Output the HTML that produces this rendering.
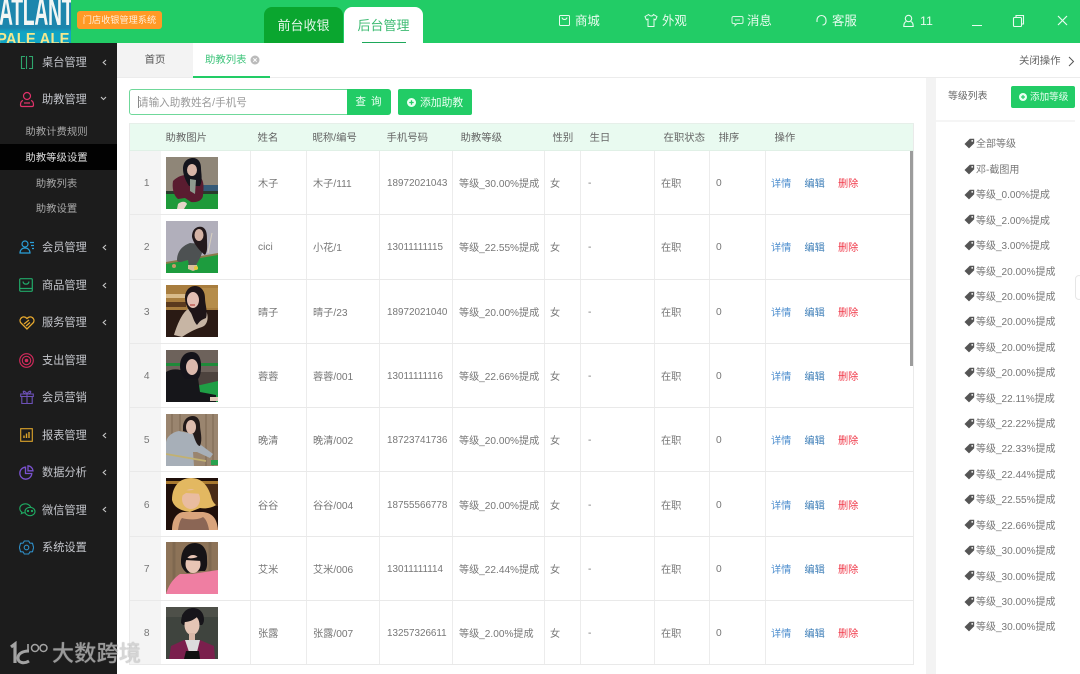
<!DOCTYPE html>
<html lang="zh">
<head>
<meta charset="utf-8">
<title>助教列表</title>
<style>
*{box-sizing:border-box;margin:0;padding:0}
html,body{width:1080px;height:674px;overflow:hidden;background:#fff}
body{position:relative;font-family:"Liberation Sans","Noto Sans CJK SC",sans-serif;font-size:10.4px;color:#666}
.a{position:absolute;white-space:nowrap}
svg{display:block}
.hd{left:0;top:0;width:1080px;height:43px;background:#22cc66}
.logo{left:0;top:0;width:71px;height:43px;background:linear-gradient(#1c86ad 0,#1c86ad 28px,#10a4c4 32px);overflow:hidden}
.logo b{position:absolute;white-space:nowrap;font-family:"Liberation Sans",sans-serif}
.badge{left:77px;top:11px;width:85px;height:18px;background:#ff9a26;border-radius:3px;color:#ffeeda;font-size:9.2px;line-height:19px;text-align:center}
.t1{left:264px;top:7px;width:79px;height:36px;background:#0aa62f;border-radius:8px 8px 0 0;color:#e3f7e8;font-size:13px;line-height:37px;text-align:center}
.t2{left:344px;top:7px;width:79px;height:36px;background:#fff;border-radius:8px 8px 0 0;color:#3dbb72;font-size:13px;line-height:37px;text-align:center}
.t2 i{position:absolute;left:18px;top:34.5px;width:44px;height:1.5px;background:#1da85a}
.nv{color:#e8fbef;font-size:12.4px;line-height:16px;top:13px}
.side{left:0;top:43px;width:117px;height:631px;background:#1c1c1c}
.m{left:42px;color:#c4c6cc;font-size:11.2px;line-height:16px}
.s{left:0;width:113px;text-align:center;color:#a6a6a6;font-size:10.4px;line-height:16px}
.arr{left:101px;color:#c8c8c8}
.bar{left:117px;top:43px;width:963px;height:35px;border-bottom:1px solid #ececec}
.home{left:117px;top:43px;width:76px;height:34px;background:#f3f3f3;text-align:center;line-height:36px;color:#555}
.act{left:193px;top:43px;width:77px;height:35px;border-bottom:2px solid #22cc66;color:#3dc47a;line-height:35px;padding-left:12px}
.inp{left:129px;top:89px;width:219px;height:26px;border:1px solid #6fd89a;border-radius:3px 0 0 3px;color:#9a9a9a;font-size:10.6px;line-height:26px;padding-left:8px}
.btn{background:#22cc66;color:#eafff2;text-align:center;border-radius:2px}
table{position:absolute;left:129px;top:123px;width:784px;border-collapse:collapse;table-layout:fixed;border-left:1px solid #eaeaea;border-right:1px solid #eaeaea}
thead tr{height:27px;background:#e9faf0}
thead th{font-weight:400;text-align:left;color:#666;font-size:10.4px;border-top:1px solid #e6efe9;border-bottom:1px solid #e0f0e6;padding-bottom:1px}
tbody tr{height:64.3px}
tbody td{border-bottom:1px solid #e9e9e9;border-right:1px solid #ececec;color:#777;font-size:10.2px;white-space:nowrap;overflow:hidden}
tbody td:nth-child(1){background:#f4f4f4;text-align:center;border-right:0;color:#777;padding-left:3px;padding-top:2px}
th:nth-child(2){padding-left:5px}th:nth-child(3){padding-left:7px}th:nth-child(4){padding-left:6px}th:nth-child(5){padding-left:7px}th:nth-child(6){padding-left:8px}th:nth-child(7){padding-left:8px}th:nth-child(8){padding-left:9px}th:nth-child(9){padding-left:9px}th:nth-child(10){padding-left:9px}th:nth-child(11){padding-left:9px}
td:nth-child(2){padding-left:5px}td:nth-child(3){padding-left:7px}td:nth-child(4){padding-left:6px}td:nth-child(5){padding-left:7px;padding-top:2px;font-size:9.9px}td:nth-child(6){padding-left:6px;font-size:10.1px}td:nth-child(7){padding-left:5px}td:nth-child(8){padding-left:7px;padding-top:2px}td:nth-child(9){padding-left:6px}td:nth-child(10){padding-left:6px;padding-top:2px}td:nth-child(11){padding-left:5px;border-right:0}
td u{text-decoration:none;display:inline-block;width:33.5px}
.d{color:#4f8fcf}.e{color:#3f7fb8}.x{color:#f03c4c}
.sb{left:910px;top:151px;width:3px;height:215px;background:#9c9c9c}
.gap{left:926px;top:78px;width:10px;height:596px;background:#f3f3f3}
.rh{left:936px;top:120px;width:139px;height:2px;background:#f5f5f5}
.it{left:976px;color:#777;font-size:10px;line-height:14px;margin-top:1px}
.tag{left:963.5px;width:11px;height:11px;margin-top:.5px}
.wm{left:52px;top:639px;color:#c9c9c9;opacity:.72;font-size:22px;line-height:30px;letter-spacing:.3px;font-weight:500;text-shadow:0 0 1px #888}
</style>
</head>
<body>
<svg width="0" height="0" style="position:absolute"><defs>
<symbol id="tg" viewBox="0 0 11 11"><path d="M5.800 .8h4.400v4.400L5 10.400 .5 6z" fill="#555"/><circle cx="8.200" cy="2.900" r=".9" fill="#fff"/></symbol>
</defs></svg>

<div class="a hd"></div>
<div class="a logo">
<b style="left:-1px;top:-8px;color:#f2f6f4;font-size:39px;line-height:42px;transform:scaleX(.495);transform-origin:0 0;letter-spacing:-.5px">ATLANT</b>
<b style="left:-3px;top:31px;color:#f3e88e;font-size:16px;line-height:18px;transform:scaleX(.92);transform-origin:0 0;letter-spacing:.2px">PALE ALE</b>
</div>
<div class="a badge">门店收银管理系统</div>
<div class="a t1">前台收银</div>
<div class="a t2">后台管理<i></i></div>

<svg class="a" style="left:558px;top:14px" width="13" height="13" viewBox="0 0 13 13" fill="none" stroke="#e8fbef" stroke-width="1"><rect x="1.500" y="1.500" width="10" height="10" rx="1"/><path d="M4 3.500c.4 2.600 4.600 2.600 5 0"/></svg>
<div class="a nv" style="left:575px">商城</div>
<svg class="a" style="left:644px;top:13px" width="14" height="15" viewBox="0 0 14 15" fill="none" stroke="#e8fbef" stroke-width="1"><path d="M4.600 1.500 1 3.600l1.400 3.200 1.600-.7V13.500h6V6.100l1.600.7L13 3.600 9.400 1.500c-.5 2-3.300 2-4.800 0z"/></svg>
<div class="a nv" style="left:662px">外观</div>
<svg class="a" style="left:731px;top:15px" width="13" height="12" viewBox="0 0 13 12" fill="none" stroke="#d5f5e0" stroke-width="1"><path d="M2.500 1.500h8a1.500 1.500 0 0 1 1.500 1.500v4a1.500 1.500 0 0 1-1.500 1.500H6L4 10.500V8.500H2.500A1.500 1.500 0 0 1 1 7V3a1.500 1.500 0 0 1 1.500-1.500z"/><path d="M4 5h5"/></svg>
<div class="a nv" style="left:747px">消息</div>
<svg class="a" style="left:815px;top:14px" width="13" height="14" viewBox="0 0 13 14" fill="none" stroke="#e8fbef" stroke-width="1.100"><path d="M2 8V6a4.500 4.500 0 0 1 9 0v1.500c0 2-1.500 3.500-3.500 3.500"/></svg>
<div class="a nv" style="left:832px">客服</div>
<svg class="a" style="left:902px;top:14px" width="13" height="14" viewBox="0 0 13 14" fill="none" stroke="#e8fbef" stroke-width="1.100"><circle cx="6.500" cy="4.500" r="3.200"/><path d="M4.300 7.500C2.500 8 1.800 9.500 1.800 12.500h9.400c0-3-.7-4.500-2.500-5"/></svg>
<div class="a nv" style="left:920px">11</div>
<div class="a" style="left:972px;top:25px;width:10px;height:1.200px;background:#e8fbef"></div>
<svg class="a" style="left:1012px;top:14px" width="13" height="14" viewBox="0 0 13 14" fill="none" stroke="#e8fbef" stroke-width="1.100"><rect x="1.500" y="3.500" width="8" height="9" rx="1"/><path d="M4 3.500V1.500h7.500v8.500H9.500"/></svg>
<svg class="a" style="left:1057px;top:15px" width="11" height="11" viewBox="0 0 11 11" fill="none" stroke="#e8fbef" stroke-width="1.200"><path d="M1 1l9 9M10 1l-9 9"/></svg>

<div class="a side"></div>
<div class="a" style="left:0;top:144px;width:117px;height:26px;background:#020202"></div>

<svg class="a" style="left:20px;top:55px" width="14" height="15" viewBox="0 0 14 15" fill="none" stroke="#2fa56c" stroke-width="1.100"><path d="M5 1.500H1.500v12H5M9 1.500h3.500v12H9M6.500 1v13"/></svg>
<div class="a m" style="top:55px">桌台管理</div>
<svg class="a" style="left:19px;top:91px" width="16" height="17" viewBox="0 0 16 17" fill="none" stroke="#e0326a" stroke-width="1.200"><circle cx="8" cy="5" r="3.500"/><path d="M4 9.500c-2 .5-2.500 2-2.500 4.500 0 1 .5 1.500 1.500 1.500h10c1 0 1.500-.5 1.500-1.500 0-2.500-.5-4-2.500-4.500M5 12h6"/></svg>
<div class="a m" style="top:92px">助教管理</div>
<div class="a s" style="top:125px">助教计费规则</div>
<div class="a s" style="top:151px;color:#dcdcdc">助教等级设置</div>
<div class="a s" style="top:177px">助教列表</div>
<div class="a s" style="top:202px">助教设置</div>
<svg class="a" style="left:19px;top:240px" width="16" height="14" viewBox="0 0 16 14" fill="none" stroke="#2a9fd8" stroke-width="1.200"><circle cx="6" cy="4" r="3"/><path d="M1 13c0-3 2-5 5-5s5 2 5 5zM11 2.500h4M12 5.500h3M13 8.500h2"/></svg>
<div class="a m" style="top:240px">会员管理</div>
<svg class="a" style="left:19px;top:278px" width="14" height="14" viewBox="0 0 14 14" fill="none" stroke="#21a868" stroke-width="1.200"><rect x=".7" y=".7" width="12.600" height="12.600" rx="1"/><path d="M.7 10.500h12.600M4 3.500c.5 3.500 5.500 3.500 6 0"/></svg>
<div class="a m" style="top:278px">商品管理</div>
<svg class="a" style="left:19px;top:316px" width="16" height="14" viewBox="0 0 16 14" fill="none" stroke="#e8a92e" stroke-width="1.300"><path d="M8 13 1.500 6.500C-.5 3 4-1.500 8 2.500c4-4 8.500.5 6.500 4zM5 8l5-4M7 10l4-3.500"/></svg>
<div class="a m" style="top:315px">服务管理</div>
<svg class="a" style="left:19px;top:353px" width="15" height="15" viewBox="0 0 15 15" fill="none" stroke="#d22a5c" stroke-width="1.100"><circle cx="7.500" cy="7.500" r="6.800"/><circle cx="7.500" cy="7.500" r="4.200"/><circle cx="7.500" cy="7.500" r="1.800" fill="#d22a5c" stroke="none"/></svg>
<div class="a m" style="top:353px">支出管理</div>
<svg class="a" style="left:20px;top:390px" width="14" height="14" viewBox="0 0 14 14" fill="none" stroke="#6d51b8" stroke-width="1.100"><path d="M.7 4h12.600v2.500H.7zM1.800 6.500v7h10.400v-7M7 4v9.500M7 4C5 .5 2.500.5 3.500 2.500 4 3.500 5.500 4 7 4zM7 4c2-3.500 4.500-3.500 3.500-1.500C10 3.500 8.500 4 7 4z"/></svg>
<div class="a m" style="top:390px">会员营销</div>
<svg class="a" style="left:20px;top:428px" width="13" height="14" viewBox="0 0 13 14" fill="none" stroke="#dea52b" stroke-width="1.100"><rect x=".7" y=".7" width="11.600" height="12.600"/><path d="M4 10V7.500M6.500 10V5.500M9 10V4" stroke-width="1.400"/></svg>
<div class="a m" style="top:428px">报表管理</div>
<svg class="a" style="left:19px;top:465px" width="15" height="15" viewBox="0 0 15 15" fill="none" stroke="#7a52d0" stroke-width="1.300"><path d="M6.500 2.200a6 6 0 1 0 6.300 6.300H6.500z"/><path d="M9 .8a5.500 5.500 0 0 1 5 5H9z"/></svg>
<div class="a m" style="top:465px">数据分析</div>
<svg class="a" style="left:19px;top:503px" width="17" height="14" viewBox="0 0 17 14" fill="none" stroke="#1faa62" stroke-width="1.100"><path d="M6.500.8C3 .8.800 3 .8 5.500c0 1.500.7 2.700 2 3.600l-.4 1.500 1.800-.9c.5.100 1 .2 1.500.2"/><path d="M12 4.500c-1.500-3-4-3.700-5.500-3.700"/><ellipse cx="11" cy="8.500" rx="5" ry="4.200"/><circle cx="9" cy="8" r=".6" fill="#1faa62"/><circle cx="13" cy="8" r=".6" fill="#1faa62"/></svg>
<div class="a m" style="top:503px">微信管理</div>
<svg class="a" style="left:19px;top:540px" width="15" height="15" viewBox="0 0 15 15" fill="none" stroke="#2f8fc8" stroke-width="1.100"><path d="M5.300 1 9.700 1l1.200 2.100 2.600.2 1.100 4.200-1.100 4.200-2.600.2L9.700 14H5.300l-1.200-2.100-2.600-.2L.4 7.500l1.100-4.200 2.600-.2z"/><circle cx="7.500" cy="7.500" r="2.300"/></svg>
<div class="a m" style="top:540px">系统设置</div>

<svg class="a arr" style="left:102px;top:59px" width="5" height="7" viewBox="0 0 5 7" fill="none" stroke="#c8c8c8" stroke-width="1.100"><path d="M4 1 1.200 3.500 4 6"/></svg>
<svg class="a" style="left:100px;top:96px" width="7" height="5" viewBox="0 0 7 5" fill="none" stroke="#c8c8c8" stroke-width="1.100"><path d="M1 1l2.500 2.500L6 1"/></svg>
<svg class="a arr" style="left:102px;top:244px" width="5" height="7" viewBox="0 0 5 7" fill="none" stroke="#c8c8c8" stroke-width="1.100"><path d="M4 1 1.200 3.500 4 6"/></svg>
<svg class="a arr" style="left:102px;top:282px" width="5" height="7" viewBox="0 0 5 7" fill="none" stroke="#c8c8c8" stroke-width="1.100"><path d="M4 1 1.200 3.500 4 6"/></svg>
<svg class="a arr" style="left:102px;top:319px" width="5" height="7" viewBox="0 0 5 7" fill="none" stroke="#c8c8c8" stroke-width="1.100"><path d="M4 1 1.200 3.500 4 6"/></svg>
<svg class="a arr" style="left:102px;top:432px" width="5" height="7" viewBox="0 0 5 7" fill="none" stroke="#c8c8c8" stroke-width="1.100"><path d="M4 1 1.200 3.500 4 6"/></svg>
<svg class="a arr" style="left:102px;top:469px" width="5" height="7" viewBox="0 0 5 7" fill="none" stroke="#c8c8c8" stroke-width="1.100"><path d="M4 1 1.200 3.500 4 6"/></svg>
<svg class="a arr" style="left:102px;top:506px" width="5" height="7" viewBox="0 0 5 7" fill="none" stroke="#c8c8c8" stroke-width="1.100"><path d="M4 1 1.200 3.500 4 6"/></svg>

<div class="a bar"></div>
<div class="a home">首页</div>
<div class="a act">助教列表<svg style="position:absolute;left:57px;top:12px" width="10" height="10" viewBox="0 0 10 10"><circle cx="5" cy="5" r="4.500" fill="#bbb"/><path d="M3.300 3.300l3.400 3.400M6.700 3.300 3.300 6.700" stroke="#fff" stroke-width="1"/></svg></div>
<div class="a" style="left:1019px;top:54px;color:#666;line-height:15px">关闭操作</div>
<svg class="a" style="left:1068px;top:56px" width="7" height="11" viewBox="0 0 7 11" fill="none" stroke="#555" stroke-width="1"><path d="M1 1l4.500 4.500L1 10"/></svg>

<div class="a inp">请输入助教姓名/手机号</div>
<div class="a" style="left:138px;top:96px;width:1px;height:12px;background:#888"></div>
<div class="a btn" style="left:347px;top:89px;width:44px;height:26px;line-height:27px;font-size:10.6px;letter-spacing:1px;border-radius:0 3px 3px 0">查 询</div>
<div class="a btn" style="left:398px;top:89px;width:74px;height:26px;line-height:28px;padding-left:22px;text-align:left;font-size:10.800px">添加助教<svg style="position:absolute;left:9px;top:8.500px" width="9" height="9" viewBox="0 0 9 9"><circle cx="4.500" cy="4.500" r="4.500" fill="#eafff2"/><path d="M2.300 4.500h4.400M4.500 2.300v4.400" stroke="#22cc66" stroke-width="1.300"/></svg></div>

<table>
<colgroup><col style="width:31px"><col style="width:90px"><col style="width:56px"><col style="width:73px"><col style="width:73px"><col style="width:92px"><col style="width:36px"><col style="width:74px"><col style="width:55px"><col style="width:56px"><col style="width:148px"></colgroup>
<thead><tr><th></th><th>助教图片</th><th>姓名</th><th>昵称/编号</th><th>手机号码</th><th>助教等级</th><th>性别</th><th>生日</th><th>在职状态</th><th>排序</th><th>操作</th></tr></thead>
<tbody>
<tr><td>1</td><td><svg width="52" height="52" viewBox="0 0 52 52"><rect width="52" height="52" fill="#8f8678"/><rect x="36" y="28" width="16" height="8" fill="#355a78"/><rect y="36" width="52" height="16" fill="#1f9a3a"/><rect y="34" width="52" height="3" fill="#2a3b2c"/><path d="M7 24c5-5 10-6 13-6l14 2c4 3 4 10 3 18 0 4-4 8-12 7l-6-4-7 1C7 38 6 30 7 24z" fill="#5a1c30"/><path d="M17 12c0-8 5-11 10-11s8 4 8 10c0 5 2 12-1 18l-11 0c-4-6-6-12-6-17z" fill="#15151d"/><ellipse cx="26" cy="13" rx="5" ry="6" fill="#d8b6a8"/><path d="M24 22l6 1-1 14-5-3z" fill="#8d9a8e"/><path d="M12 47c3-3 8-3 9 0l-3 5h-7z" fill="#e6d5c8"/></svg></td><td>木子</td><td>木子/111</td><td>18972021043</td><td>等级_30.00%提成</td><td>女</td><td>-</td><td>在职</td><td>0</td><td><u class="d">详情</u><u class="e">编辑</u><u class="x">删除</u></td></tr>
<tr><td>2</td><td><svg width="52" height="52" viewBox="0 0 52 52"><rect width="52" height="52" fill="#b1afbb"/><path d="M0 42 52 33v19H0z" fill="#1d9c3e"/><path d="M0 41 52 32v2L0 43z" fill="#8c7a4a"/><path d="M11 39c0-7 4-14 13-17l11 1c3 4 1 10-1 14l-5 9-6 0-1-7-7 2c-2 0-4 0-4-2z" fill="#4d5152"/><path d="M26 16c0-9 6-11 10-10 5 2 5 8 5 13 0 5 1 11-2 15-4-3-11-10-13-18z" fill="#23191c"/><ellipse cx="33" cy="14" rx="4.500" ry="6" fill="#d5b3a5"/><path d="M22 44h9l1 4-5 2-5-2z" fill="#d8bd9d"/><circle cx="8" cy="45" r="2" fill="#c59a6a"/><circle cx="30" cy="47" r="2" fill="#e3c83e"/><path d="M46 12 42 32" stroke="#d8d0c0" stroke-width="1"/></svg></td><td style="padding-top:2px">cici</td><td>小花/1</td><td>13011111115</td><td>等级_22.55%提成</td><td>女</td><td>-</td><td>在职</td><td>0</td><td><u class="d">详情</u><u class="e">编辑</u><u class="x">删除</u></td></tr>
<tr><td>3</td><td><svg width="52" height="52" viewBox="0 0 52 52"><rect width="52" height="52" fill="#a87d3e"/><rect x="0" y="9" width="22" height="4" fill="#d9bb8a"/><rect x="0" y="17" width="20" height="5" fill="#5b3a1e"/><rect x="0" y="25" width="52" height="27" fill="#2a1a14"/><rect x="34" y="3" width="18" height="20" fill="#b58c4a"/><path d="M8 50c3-10 8-22 14-26l18 2c3 5 2 14-4 16-7 2-14 6-20 10z" fill="#c7b5a4"/><path d="M19 13c0-8 5-12 10-12 6 0 10 5 10 12 0 6 3 14 1 20-5 2-6 3-9 7-3-3-4-8-6-12-3-4-6-9-6-15z" fill="#1e1518"/><ellipse cx="27" cy="15" rx="6" ry="8" fill="#e3bfb3"/><path d="M24 20h5" stroke="#b8453f" stroke-width="1.200"/></svg></td><td>晴子</td><td>晴子/23</td><td>18972021040</td><td>等级_20.00%提成</td><td>女</td><td>-</td><td>在职</td><td>0</td><td><u class="d">详情</u><u class="e">编辑</u><u class="x">删除</u></td></tr>
<tr><td>4</td><td><svg width="52" height="52" viewBox="0 0 52 52"><rect width="52" height="52" fill="#6d625b"/><rect y="13" width="52" height="3" fill="#1f8a3a"/><rect y="22" width="52" height="14" fill="#4d433e"/><path d="M30 36 52 31v21H30z" fill="#1f9e45"/><path d="M0 22C6 18 14 19 20 22l12 6 2 14 16 3v7H0z" fill="#16161a"/><path d="M14 16c0-9 5-14 12-14 6 0 9 6 9 13 0 5 0 10-3 14H19c-3-4-5-8-5-13z" fill="#14131a"/><ellipse cx="26" cy="17" rx="6" ry="8" fill="#dab8ac"/><rect x="44" y="47" width="8" height="4" fill="#e0c8b8"/></svg></td><td>蓉蓉</td><td>蓉蓉/001</td><td>13011111116</td><td>等级_22.66%提成</td><td>女</td><td>-</td><td>在职</td><td>0</td><td><u class="d">详情</u><u class="e">编辑</u><u class="x">删除</u></td></tr>
<tr><td>5</td><td><svg width="52" height="52" viewBox="0 0 52 52"><rect width="52" height="52" fill="#9a856f"/><path d="M6 0v52M14 0v52M40 0v52M47 0v52" stroke="#8b7660" stroke-width="2"/><path d="M0 52V28c1-6 7-10 13-11l14 3 8 11 12 9-3 4-13-6-4 0 1 14z" fill="#a7afb8"/><path d="M17 12c1-7 5-10 10-10s7 5 7 9c0 6 3 14 0 21-3 0-5-6-7-12l-10-3z" fill="#221a1a"/><ellipse cx="25" cy="13" rx="5" ry="7" fill="#dcbcae"/><path d="M0 40 40 47" stroke="#c2b171" stroke-width="1.800"/><rect x="45" y="46" width="7" height="5" fill="#28a14d"/></svg></td><td>晚清</td><td>晚清/002</td><td>18723741736</td><td>等级_20.00%提成</td><td>女</td><td>-</td><td>在职</td><td>0</td><td><u class="d">详情</u><u class="e">编辑</u><u class="x">删除</u></td></tr>
<tr><td>6</td><td><svg width="52" height="52" viewBox="0 0 52 52"><rect width="52" height="52" fill="#1f0f0a"/><rect y="3" width="52" height="3" fill="#a9792f"/><rect x="34" y="6" width="18" height="22" fill="#4a2c16"/><path d="M6 52c0-10 4-17 11-18h20c9 1 14 6 15 18z" fill="#d9a47c"/><path d="M12 52c1-6 2-10 4-12 6 2 16 2 21-1 3 2 5 7 6 13z" fill="#8b6655"/><path d="M6 22C6 8 14 0 25 0s17 8 20 18c1 5 3 7 5 9-4 3-11 4-16 3l-10 4c-8-1-16-4-18-12z" fill="#e3b861"/><ellipse cx="25" cy="21" rx="9" ry="10" fill="#e9bca0"/><path d="M15 11c6 2 13 2 20-2l3 7-18-1-6 4z" fill="#e3b861"/></svg></td><td>谷谷</td><td>谷谷/004</td><td>18755566778</td><td>等级_20.00%提成</td><td>女</td><td>-</td><td>在职</td><td>0</td><td><u class="d">详情</u><u class="e">编辑</u><u class="x">删除</u></td></tr>
<tr><td>7</td><td><svg width="52" height="52" viewBox="0 0 52 52"><rect width="52" height="52" fill="#8d7358"/><path d="M8 0v52M44 0v36" stroke="#7f6850" stroke-width="3"/><path d="M0 52c2-6 5-14 14-20l12 0 26-4v24z" fill="#ef7ea2"/><path d="M15 20C15 7 21 1 29 1c8 0 12 7 12 15 0 4 1 9-2 13h-4l-14 2c-4-3-6-7-6-11z" fill="#161316"/><ellipse cx="27" cy="22" rx="7.500" ry="9" fill="#e8c4b4"/><path d="M19 15c4 2 10 2 16-2l1 6-17-1z" fill="#161316"/></svg></td><td>艾米</td><td>艾米/006</td><td>13011111114</td><td>等级_22.44%提成</td><td>女</td><td>-</td><td>在职</td><td>0</td><td><u class="d">详情</u><u class="e">编辑</u><u class="x">删除</u></td></tr>
<tr><td>8</td><td><svg width="52" height="52" viewBox="0 0 52 52"><rect width="52" height="52" fill="#3f443e"/><rect y="0" width="52" height="10" fill="#4e5049"/><path d="M3 52l2-13 13-6 16 0 14 6 1 13z" fill="#7b1f4d"/><path d="M19 33h15l-3 12-4 2-4-2z" fill="#dcdcdc"/><path d="M20 44h13l1 8H18z" fill="#111"/><path d="M15 16C15 5 21 1 27 1c7 0 11 5 11 12 0 2-1 4-2 5H17z" fill="#17151a"/><ellipse cx="26" cy="18" rx="7.500" ry="10" fill="#e4c5b5"/><rect x="23" y="26" width="6" height="7" fill="#d9b8a8"/><path d="M18 15c4 0 9-1 14-6l5 6-1-9-13-4-7 6z" fill="#17151a"/></svg></td><td>张露</td><td>张露/007</td><td>13257326611</td><td>等级_2.00%提成</td><td>女</td><td>-</td><td>在职</td><td>0</td><td><u class="d">详情</u><u class="e">编辑</u><u class="x">删除</u></td></tr>
</tbody>
</table>
<div class="a sb"></div>

<div class="a gap"></div>
<div class="a" style="left:948px;top:89px;color:#666;line-height:15px;font-size:9.900px">等级列表</div>
<div class="a btn" style="left:1011px;top:86px;width:64px;height:22px;line-height:24px;padding-left:19px;text-align:left;font-size:9.600px;border-radius:2px">添加等级<svg style="position:absolute;left:8px;top:7px" width="8" height="8" viewBox="0 0 9 9"><circle cx="4.500" cy="4.500" r="4.500" fill="#eafff2"/><path d="M2.300 4.500h4.400M4.500 2.300v4.400" stroke="#22cc66" stroke-width="1.300"/></svg></div>
<div class="a rh"></div>

<svg class="a tag" style="top:137px"><use href="#tg"/></svg><div class="a it" style="top:137px">全部等级</div>
<svg class="a tag" style="top:163px"><use href="#tg"/></svg><div class="a it" style="top:163px">邓-截图用</div>
<svg class="a tag" style="top:188px"><use href="#tg"/></svg><div class="a it" style="top:188px">等级_0.00%提成</div>
<svg class="a tag" style="top:213px"><use href="#tg"/></svg><div class="a it" style="top:214px">等级_2.00%提成</div>
<svg class="a tag" style="top:239px"><use href="#tg"/></svg><div class="a it" style="top:239px">等级_3.00%提成</div>
<svg class="a tag" style="top:264px"><use href="#tg"/></svg><div class="a it" style="top:265px">等级_20.00%提成</div>
<svg class="a tag" style="top:290px"><use href="#tg"/></svg><div class="a it" style="top:290px">等级_20.00%提成</div>
<svg class="a tag" style="top:315px"><use href="#tg"/></svg><div class="a it" style="top:315px">等级_20.00%提成</div>
<svg class="a tag" style="top:341px"><use href="#tg"/></svg><div class="a it" style="top:341px">等级_20.00%提成</div>
<svg class="a tag" style="top:366px"><use href="#tg"/></svg><div class="a it" style="top:366px">等级_20.00%提成</div>
<svg class="a tag" style="top:391px"><use href="#tg"/></svg><div class="a it" style="top:392px">等级_22.11%提成</div>
<svg class="a tag" style="top:417px"><use href="#tg"/></svg><div class="a it" style="top:417px">等级_22.22%提成</div>
<svg class="a tag" style="top:442px"><use href="#tg"/></svg><div class="a it" style="top:442px">等级_22.33%提成</div>
<svg class="a tag" style="top:468px"><use href="#tg"/></svg><div class="a it" style="top:468px">等级_22.44%提成</div>
<svg class="a tag" style="top:493px"><use href="#tg"/></svg><div class="a it" style="top:493px">等级_22.55%提成</div>
<svg class="a tag" style="top:518px"><use href="#tg"/></svg><div class="a it" style="top:519px">等级_22.66%提成</div>
<svg class="a tag" style="top:544px"><use href="#tg"/></svg><div class="a it" style="top:544px">等级_30.00%提成</div>
<svg class="a tag" style="top:569px"><use href="#tg"/></svg><div class="a it" style="top:570px">等级_30.00%提成</div>
<svg class="a tag" style="top:595px"><use href="#tg"/></svg><div class="a it" style="top:595px">等级_30.00%提成</div>
<svg class="a tag" style="top:620px"><use href="#tg"/></svg><div class="a it" style="top:620px">等级_30.00%提成</div>
<div class="a" style="left:1075px;top:275px;width:8px;height:25px;background:#fff;border:1px solid #e6e6e6;border-radius:4px"></div>

<svg class="a" style="left:9px;top:641px;opacity:.78" width="40" height="24" viewBox="0 0 40 24" fill="none" stroke="#c9c9c9"><path d="M2 6 6 3v19" stroke-width="3.200"/><path d="M20 10c-7 0-11 3-11 7 0 5 6 6 11 3" stroke-width="3"/><path d="M19 3v8" stroke-width="1.600"/><circle cx="26" cy="7" r="3.500" stroke-width="1.500"/><circle cx="34.500" cy="7" r="3.500" stroke-width="1.500"/></svg>
<div class="a wm">大数跨境</div>
</body>
</html>
